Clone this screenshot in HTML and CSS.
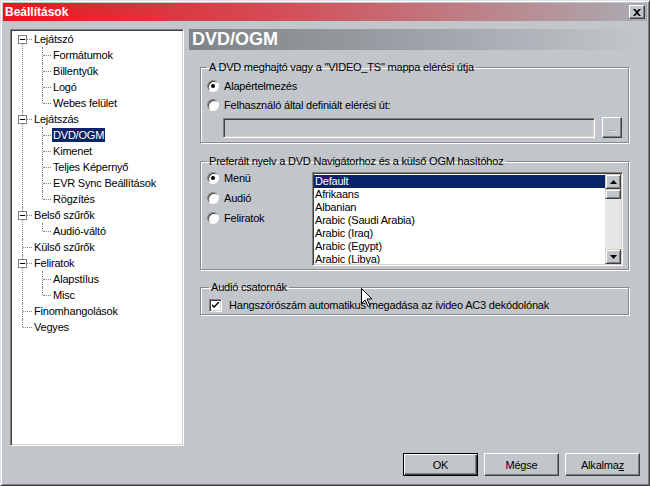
FILE: index.html
```html
<!DOCTYPE html>
<html lang="hu">
<head>
  <meta charset="UTF-8">
  <title>Beállítások</title>
  <link rel="stylesheet" href="styles.css">
</head>
<body>
  <div class="window">
    <div class="titlebar">
      <span class="title">Beállítások</span>
      <span class="close-btn">
        <svg width="8" height="7" viewBox="0 0 8 7"><path d="M0 0h2l2 2 2-2h2L5 3.5 8 7H6L4 5 2 7H0l3-3.5z" fill="#000"/></svg>
      </span>
    </div>

    <div class="content">
      <div class="main">
        <ul class="tree">
          <li class="has-kids"><span class="toggle"></span><span class="label">Lejátszó</span>
            <ul>
              <li><span class="label">Formátumok</span></li>
              <li><span class="label">Billentyűk</span></li>
              <li><span class="label">Logó</span></li>
              <li><span class="label">Webes felület</span></li>
            </ul>
          </li>
          <li class="has-kids"><span class="toggle"></span><span class="label">Lejátszás</span>
            <ul>
              <li><span class="label selected">DVD/OGM</span></li>
              <li><span class="label">Kimenet</span></li>
              <li><span class="label">Teljes Képernyő</span></li>
              <li><span class="label">EVR Sync Beállítások</span></li>
              <li><span class="label">Rögzítés</span></li>
            </ul>
          </li>
          <li class="has-kids"><span class="toggle"></span><span class="label">Belső szűrők</span>
            <ul>
              <li><span class="label">Audió-váltó</span></li>
            </ul>
          </li>
          <li><span class="label">Külső szűrők</span></li>
          <li class="has-kids"><span class="toggle"></span><span class="label">Feliratok</span>
            <ul>
              <li><span class="label">Alapstílus</span></li>
              <li><span class="label">Misc</span></li>
            </ul>
          </li>
          <li><span class="label">Finomhangolások</span></li>
          <li><span class="label">Vegyes</span></li>
        </ul>

        <div class="page">
          <div class="page-header">DVD/OGM</div>

          <fieldset class="group group-path">
            <legend>A DVD meghajtó vagy a "VIDEO_TS" mappa elérési útja</legend>
            <div class="option"><span class="radio checked"></span>Alapértelmezés</div>
            <div class="option"><span class="radio"></span>Felhasználó által definiált elérési út:</div>
            <div class="path-row">
              <div class="textfield"></div>
              <span class="small-btn">...</span>
            </div>
          </fieldset>

          <fieldset class="group group-lang">
            <legend>Preferált nyelv a DVD Navigátorhoz és a külső OGM hasítóhoz</legend>
            <div class="lang-row">
              <div class="lang-options">
                <div class="option tall"><span class="radio checked"></span>Menü</div>
                <div class="option tall"><span class="radio"></span>Audió</div>
                <div class="option tall"><span class="radio"></span>Feliratok</div>
              </div>
              <div class="listbox">
                <ul class="items">
                  <li class="selected">Default</li>
                  <li>Afrikaans</li>
                  <li>Albanian</li>
                  <li>Arabic (Saudi Arabia)</li>
                  <li>Arabic (Iraq)</li>
                  <li>Arabic (Egypt)</li>
                  <li>Arabic (Libya)</li>
                </ul>
                <div class="scrollbar">
                  <span class="sb-btn"><svg width="7" height="4" viewBox="0 0 7 4"><path d="M3.5 0L7 4H0z" fill="#000"/></svg></span>
                  <span class="sb-thumb"></span>
                  <span class="sb-track"></span>
                  <span class="sb-btn"><svg width="7" height="4" viewBox="0 0 7 4"><path d="M0 0h7L3.5 4z" fill="#000"/></svg></span>
                </div>
              </div>
            </div>
          </fieldset>

          <fieldset class="group group-audio">
            <legend>Audió csatornák</legend>
            <div class="option">
              <span class="checkbox"><svg width="7" height="7" viewBox="0 0 7 7"><path d="M0 2l2 2 5-5v2L2 6 0 4z" fill="#000"/></svg></span>
              Hangszórószám automatikus megadása az ivideo AC3 dekódolónak
            </div>
          </fieldset>
        </div>
      </div>

      <div class="buttons">
        <span class="btn default">OK</span>
        <span class="btn">Mégse</span>
        <span class="btn">Alkalma<u>z</u></span>
      </div>
    </div>

    <svg class="cursor" width="12" height="19" viewBox="0 0 12 19"><path d="M0.5 0.5v15l3.5-3.5 3 6.5 2-1-3-6.5h5z" fill="#fff" stroke="#000"/></svg>
  </div>
</body>
</html>
```

FILE: styles.css
```css
* {
  box-sizing: border-box;
}

body {
  margin: 0;
  background: #c2c6ca;
  font-family: "Liberation Sans", Arial, sans-serif;
  font-size: 11px;
  letter-spacing: -0.2px;
  color: #000;
}

.window {
  position: relative;
  width: 650px;
  height: 486px;
  padding: 2px;
  display: flex;
  flex-direction: column;
  background: #c2c6ca;
  border: 1px solid;
  border-color: #dfe2e5 #404040 #404040 #dfe2e5;
  box-shadow: inset 1px 1px 0 #fff, inset -1px -1px 0 #808080;
}

/* title bar */
.titlebar {
  height: 18px;
  display: flex;
  align-items: center;
  justify-content: space-between;
  padding: 0 2px 0 2px;
  background: linear-gradient(to right, #e8161d 0%, #d2505a 45%, #a9adb2 100%);
}

.title {
  color: #fff;
  font-weight: bold;
  font-size: 12px;
  letter-spacing: 0;
}

.close-btn {
  width: 16px;
  height: 14px;
  display: flex;
  align-items: center;
  justify-content: center;
  background: #c2c6ca;
  border: 1px solid;
  border-color: #fff #404040 #404040 #fff;
  box-shadow: inset -1px -1px 0 #808080;
}

.content {
  flex: 1;
  display: flex;
  flex-direction: column;
  padding: 8px 7px 7px 7px;
}

.main {
  display: flex;
  gap: 5px;
  height: 417px;
}

/* tree */
.tree {
  width: 174px;
  margin: 0;
  list-style: none;
  background: #fff;
  border: 1px solid;
  border-color: #808080 #fff #fff #808080;
  box-shadow: inset 1px 1px 0 #404040, inset -1px -1px 0 #d4d0c8;
  padding: 1px 0 0 1px;
}

.tree ul {
  margin: 0;
  padding: 0;
  list-style: none;
}

.tree li {
  position: relative;
  padding-left: 21px;
  line-height: 16px;
}

.tree li::before {
  content: "";
  position: absolute;
  left: 11px;
  top: 8px;
  width: 9px;
  border-top: 1px dotted #808080;
}

.tree li::after {
  content: "";
  position: absolute;
  left: 10px;
  top: 0;
  bottom: 0;
  border-left: 1px dotted #808080;
}

.tree > li:first-child::after {
  top: 8px;
}

.tree li:last-child::after {
  bottom: auto;
  height: 8px;
}

.tree ul li {
  padding-left: 19px;
}

.tree ul li::before {
  left: 10px;
  width: 8px;
}

.tree ul li::after {
  left: 9px;
}

.toggle {
  position: absolute;
  z-index: 1;
  left: 6px;
  top: 4px;
  width: 9px;
  height: 9px;
  background: #fff;
  border: 1px solid #808080;
}

.toggle::after {
  content: "";
  position: absolute;
  left: 1px;
  top: 3px;
  width: 5px;
  border-top: 1px solid #000;
}

.label {
  display: inline-block;
  padding: 0 1px;
  line-height: 14px;
  margin: 1px 0;
}

.label.selected {
  background: #0a246a;
  color: #fff;
}

/* settings page */
.page {
  width: 451px;
}

.page-header {
  height: 21px;
  padding-left: 3px;
  line-height: 21px;
  color: #fff;
  font-weight: bold;
  font-size: 18px;
  letter-spacing: 0;
  background: linear-gradient(to right, #7f8488 0%, #9a9ea4 45%, #b0b3b9 75%, #c2c6ca 100%);
}

.group {
  margin: 11px 0 0 11px;
  width: 429px;
  min-width: 0;
  padding: 0 6px;
  border: 1px solid #868a8e;
  box-shadow: 1px 1px 0 #fff, inset 1px 1px 0 #fff;
}

.group legend {
  padding: 0 2px;
  line-height: 13px;
}

.group-path {
  padding-top: 4px;
  padding-bottom: 4px;
}

.group-lang {
  margin-top: 12px;
  padding-top: 4px;
  padding-bottom: 3px;
  padding-right: 5px;
}

.group-audio {
  margin-top: 11px;
  padding: 3px 6px 1px 8px;
}

.option {
  display: flex;
  align-items: center;
  height: 16px;
  gap: 5px;
}

.option + .option {
  margin-top: 3px;
}

.option.tall {
  height: 20px;
  margin-top: 0;
}

.radio {
  position: relative;
  width: 12px;
  height: 12px;
  flex-shrink: 0;
  border-radius: 50%;
  background: #fff;
  border: 1px solid;
  border-color: #808080 #fff #fff #808080;
  box-shadow: inset 1px 1px 0 #404040;
}

.radio.checked::after {
  content: "";
  position: absolute;
  left: 3px;
  top: 3px;
  width: 4px;
  height: 4px;
  border-radius: 50%;
  background: #000;
}

.checkbox {
  width: 13px;
  height: 13px;
  flex-shrink: 0;
  display: flex;
  align-items: center;
  justify-content: center;
  background: #fff;
  border: 1px solid;
  border-color: #808080 #fff #fff #808080;
  box-shadow: inset 1px 1px 0 #404040, inset -1px -1px 0 #d4d0c8;
  margin-right: 2px;
}

.path-row {
  display: flex;
  align-items: center;
  gap: 7px;
  margin: 4px 0 0 16px;
}

.textfield {
  width: 373px;
  height: 20px;
  background: #c2c6ca;
  border: 1px solid;
  border-color: #808080 #fff #fff #808080;
  box-shadow: inset 1px 1px 0 #404040, inset -1px -1px 0 #d4d0c8;
}

.small-btn {
  width: 20px;
  height: 21px;
  display: flex;
  align-items: flex-end;
  justify-content: center;
  padding-bottom: 4px;
  color: #868a8e;
  text-shadow: 1px 1px 0 #fff;
  font-size: 10px;
  border: 1px solid;
  border-color: #fff #404040 #404040 #fff;
  box-shadow: inset -1px -1px 0 #808080;
}

.lang-row {
  display: flex;
}

.lang-options {
  width: 105px;
  margin-top: -4px;
}

.listbox {
  width: 311px;
  height: 94px;
  display: flex;
  background: #fff;
  overflow: hidden;
  border: 1px solid;
  border-color: #808080 #fff #fff #808080;
  box-shadow: inset 1px 1px 0 #404040, inset -1px -1px 0 #d4d0c8;
  padding: 1px;
}

.items {
  flex: 1;
  margin: 0;
  padding: 1px 0 0 0;
  list-style: none;
  overflow: hidden;
}

.items li {
  line-height: 13px;
  height: 13px;
  padding-left: 1px;
  white-space: nowrap;
}

.items li.selected {
  background: #0a246a;
  color: #fff;
}

.scrollbar {
  width: 16px;
  display: flex;
  flex-direction: column;
}

.sb-btn,
.sb-thumb {
  display: flex;
  align-items: center;
  justify-content: center;
  background: #c2c6ca;
  border: 1px solid;
  border-color: #d4d0c8 #404040 #404040 #d4d0c8;
  box-shadow: inset 1px 1px 0 #fff, inset -1px -1px 0 #808080;
}

.sb-btn {
  height: 15px;
}

.sb-thumb {
  height: 10px;
}

.sb-track {
  flex: 1;
  background: #e4e6e8;
}

/* bottom buttons */
.buttons {
  display: flex;
  justify-content: flex-end;
  gap: 6px;
  margin-top: 7px;
}

.btn {
  width: 75px;
  height: 23px;
  display: flex;
  align-items: center;
  justify-content: center;
  border: 1px solid;
  border-color: #fff #404040 #404040 #fff;
  box-shadow: inset -1px -1px 0 #808080;
}

.btn.default {
  border-color: #000;
  box-shadow: inset 1px 1px 0 #fff, inset -1px -1px 0 #404040, inset -2px -2px 0 #808080;
}

.cursor {
  position: absolute;
  left: 360px;
  top: 287px;
}
```
